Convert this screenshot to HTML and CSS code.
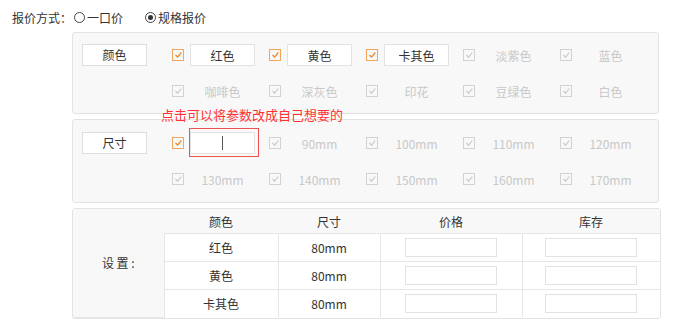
FILE: index.html
```html
<!DOCTYPE html>
<html lang="zh-CN">
<head>
    <meta charset="UTF-8">
    <title>规格报价</title>
    <link rel="stylesheet" href="styles.css">
</head>
<body>
    <div class="price-mode">
        <span class="mode-label">报价方式：</span>
        <span class="radio"></span><span class="radio-text">一口价</span>
        <span class="radio checked"></span><span class="radio-text">规格报价</span>
    </div>

    <div class="panel">
        <div class="spec-name">颜色</div>
        <div class="spec-grid">
            <div class="cell"><span class="box on"><svg viewBox="0 0 12 12"><path d="M3 6l2.5 2.5L10 3"/></svg></span><input class="val" value="红色"></div>
            <div class="cell"><span class="box on"><svg viewBox="0 0 12 12"><path d="M3 6l2.5 2.5L10 3"/></svg></span><input class="val" value="黄色"></div>
            <div class="cell"><span class="box on"><svg viewBox="0 0 12 12"><path d="M3 6l2.5 2.5L10 3"/></svg></span><input class="val" value="卡其色"></div>
            <div class="cell"><span class="box"><svg viewBox="0 0 12 12"><path d="M3 6l2.5 2.5L10 3"/></svg></span><span class="off">淡紫色</span></div>
            <div class="cell"><span class="box"><svg viewBox="0 0 12 12"><path d="M3 6l2.5 2.5L10 3"/></svg></span><span class="off">蓝色</span></div>
            <div class="cell"><span class="box"><svg viewBox="0 0 12 12"><path d="M3 6l2.5 2.5L10 3"/></svg></span><span class="off">咖啡色</span></div>
            <div class="cell"><span class="box"><svg viewBox="0 0 12 12"><path d="M3 6l2.5 2.5L10 3"/></svg></span><span class="off">深灰色</span></div>
            <div class="cell"><span class="box"><svg viewBox="0 0 12 12"><path d="M3 6l2.5 2.5L10 3"/></svg></span><span class="off">印花</span></div>
            <div class="cell"><span class="box"><svg viewBox="0 0 12 12"><path d="M3 6l2.5 2.5L10 3"/></svg></span><span class="off">豆绿色</span></div>
            <div class="cell"><span class="box"><svg viewBox="0 0 12 12"><path d="M3 6l2.5 2.5L10 3"/></svg></span><span class="off">白色</span></div>
        </div>
    </div>

    <div class="panel size-panel">
        <div class="hint">点击可以将参数改成自己想要的</div>
        <div class="spec-name">尺寸</div>
        <div class="spec-grid">
            <div class="cell"><span class="box on"><svg viewBox="0 0 12 12"><path d="M3 6l2.5 2.5L10 3"/></svg></span><span class="editing"><input class="val" value=""><i class="caret"></i></span></div>
            <div class="cell"><span class="box"><svg viewBox="0 0 12 12"><path d="M3 6l2.5 2.5L10 3"/></svg></span><span class="off">90mm</span></div>
            <div class="cell"><span class="box"><svg viewBox="0 0 12 12"><path d="M3 6l2.5 2.5L10 3"/></svg></span><span class="off">100mm</span></div>
            <div class="cell"><span class="box"><svg viewBox="0 0 12 12"><path d="M3 6l2.5 2.5L10 3"/></svg></span><span class="off">110mm</span></div>
            <div class="cell"><span class="box"><svg viewBox="0 0 12 12"><path d="M3 6l2.5 2.5L10 3"/></svg></span><span class="off">120mm</span></div>
            <div class="cell"><span class="box"><svg viewBox="0 0 12 12"><path d="M3 6l2.5 2.5L10 3"/></svg></span><span class="off">130mm</span></div>
            <div class="cell"><span class="box"><svg viewBox="0 0 12 12"><path d="M3 6l2.5 2.5L10 3"/></svg></span><span class="off">140mm</span></div>
            <div class="cell"><span class="box"><svg viewBox="0 0 12 12"><path d="M3 6l2.5 2.5L10 3"/></svg></span><span class="off">150mm</span></div>
            <div class="cell"><span class="box"><svg viewBox="0 0 12 12"><path d="M3 6l2.5 2.5L10 3"/></svg></span><span class="off">160mm</span></div>
            <div class="cell"><span class="box"><svg viewBox="0 0 12 12"><path d="M3 6l2.5 2.5L10 3"/></svg></span><span class="off">170mm</span></div>
        </div>
    </div>

    <div class="sku-wrap">
        <table class="sku">
            <colgroup>
                <col style="width:91px"><col style="width:114px"><col style="width:102px"><col style="width:142px"><col>
            </colgroup>
            <tr class="head">
                <td class="side" rowspan="4">设&nbsp;置&nbsp;:</td>
                <td>颜色</td><td>尺寸</td><td>价格</td><td>库存</td>
            </tr>
            <tr><td>红色</td><td>80mm</td><td><input class="num"></td><td><input class="num"></td></tr>
            <tr><td>黄色</td><td>80mm</td><td><input class="num"></td><td><input class="num"></td></tr>
            <tr><td>卡其色</td><td>80mm</td><td><input class="num"></td><td><input class="num"></td></tr>
        </table>
    </div>
</body>
</html>
```

FILE: styles.css
```css
body {
    margin: 0;
    padding: 9px 0 0 12px;
    font-family: "Noto Sans CJK SC", "Liberation Sans", sans-serif;
    font-size: 12px;
    color: #333;
    background: #fff;
}
.price-mode {
    display: flex;
    align-items: center;
    height: 16px;
    margin-bottom: 7px;
}
.mode-label {
    margin-right: 2px;
}
.radio {
    width: 9px;
    height: 9px;
    border: 1px solid #444;
    border-radius: 50%;
    margin-right: 2px;
    position: relative;
}
.radio.checked::after {
    content: "";
    position: absolute;
    left: 2px;
    top: 2px;
    width: 5px;
    height: 5px;
    border-radius: 50%;
    background: #333;
}
.radio-text {
    margin-right: 22px;
}
.panel {
    width: 587px;
    margin-left: 60px;
    box-sizing: border-box;
    border: 1px solid #e3e3e3;
    border-radius: 3px;
    background: #f8f8f8;
    padding: 11px 0 11px 9px;
    display: flex;
    align-items: flex-start;
    position: relative;
    margin-bottom: 5px;
}
.size-panel {
    padding-top: 12px;
    padding-bottom: 12px;
}
.spec-name {
    width: 63px;
    height: 20px;
    line-height: 20px;
    border: 1px solid #ddd;
    background: #fff;
    text-align: center;
    margin-right: 25px;
    flex: none;
}
.spec-grid {
    display: grid;
    grid-template-columns: repeat(5, 97px);
    row-gap: 14px;
}
.cell {
    display: flex;
    align-items: center;
    height: 22px;
}
.box {
    width: 12px;
    height: 12px;
    margin-right: 6px;
    flex: none;
    display: flex;
}
.box svg {
    width: 12px;
    height: 12px;
    box-sizing: border-box;
    border: 1px solid #d2d2d2;
    fill: none;
    stroke: #c6c6c6;
    stroke-width: 1.3;
}
.box.on svg {
    border-color: #f0a55c;
    stroke: #ef8a2e;
    stroke-width: 1.6;
}
.val {
    width: 65px;
    height: 22px;
    box-sizing: border-box;
    border: 1px solid #e2e2e2;
    background: #fff;
    text-align: center;
    font: inherit;
    color: #333;
    padding: 0;
    outline: none;
}
.off {
    width: 65px;
    text-align: center;
    color: #c8c8c8;
}
.editing {
    position: relative;
    display: flex;
}
.editing::after {
    content: "";
    position: absolute;
    left: -1px;
    top: -4px;
    width: 68px;
    height: 27px;
    border: 1px solid #f05050;
}
.caret {
    position: absolute;
    left: 32px;
    top: 4px;
    width: 1px;
    height: 14px;
    background: #555;
}
.hint {
    position: absolute;
    left: 88px;
    top: -13px;
    color: #f33;
    font-size: 13px;
    line-height: 16px;
}
.sku-wrap {
    width: 589px;
    margin-left: 60px;
    border: 1px solid #e3e3e3;
    border-radius: 3px;
    overflow: hidden;
    box-sizing: border-box;
}
.sku {
    width: 100%;
    border-collapse: collapse;
    table-layout: fixed;
}
.sku td {
    border: 1px solid #e6e6e6;
    text-align: center;
    height: 27px;
    padding: 0;
}
.sku tr:first-child td {
    border-top: none;
}
.sku tr:last-child td {
    border-bottom: none;
}
.sku td:last-child {
    border-right: none;
}
.sku .head td {
    background: #f8f8f8;
    height: 24px;
    border-left: none;
    border-right: none;
}
.sku td.side {
    background: #f8f8f8;
    border-left: none;
}
.num {
    width: 92px;
    height: 19px;
    box-sizing: border-box;
    border: 1px solid #e2e2e2;
    background: #fff;
    padding: 0;
    display: block;
    margin: 0 auto;
    outline: none;
}
```
